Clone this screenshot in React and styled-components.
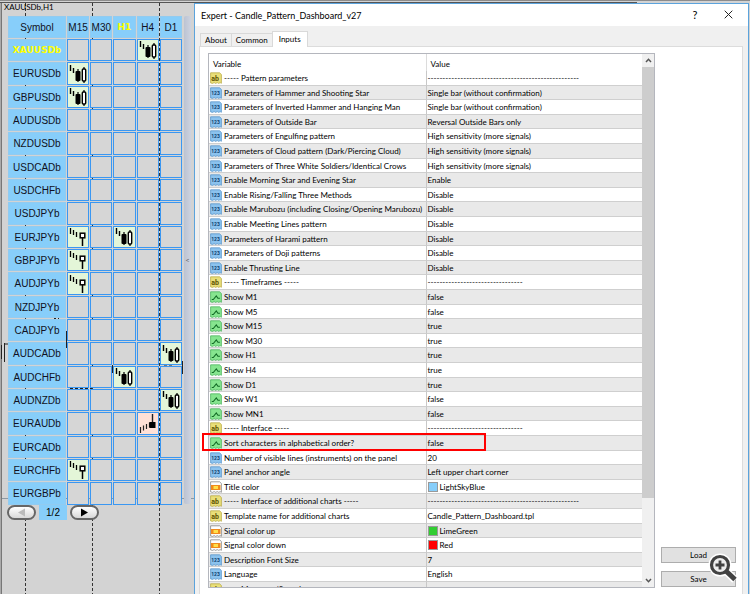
import React, { useState } from 'react';
import styled, { createGlobalStyle, css } from 'styled-components';

const GlobalStyle = createGlobalStyle`
  * {
    box-sizing: border-box;
  }
  body {
    margin: 0;
    background: #d3d3d3;
    font-family: Lato, "Liberation Sans", sans-serif;
    font-size: 8px;
    color: #000;
  }
  button {
    font: inherit;
    color: inherit;
    padding: 0;
  }
`;

const Desktop = styled.div`
  position: relative;
  display: flex;
  height: 100vh;
  overflow: hidden;
  border-top: 1px solid #8c8c8c;
`;

/* ---------- chart ---------- */

const ChartLayer = styled.svg`
  position: absolute;
  inset: 0;
  width: 100%;
  height: 100%;
`;

const ChartPane = styled.section`
  position: relative;
  flex: none;
  display: flex;
  flex-direction: column;
  width: 194px;
  padding-left: 4px;
`;

const ChartTitle = styled.div`
  height: 14px;
  padding-top: 1px;
  line-height: 10px;
`;

const PanelRow = styled.div`
  display: flex;
  padding-left: 3px;
`;

const PatternTable = styled.table`
  border-spacing: 1px;
  table-layout: fixed;
  width: 176px;
  font-family: "Liberation Sans", sans-serif;
  font-size: 10px;

  tr:nth-child(3n) > * {
    height: 23px;
  }
`;

const HeadCell = styled.th`
  height: 22px;
  padding: 0;
  overflow: hidden;
  font-family: ${({ $active }) => ($active ? '"DejaVu Sans", sans-serif' : 'inherit')};
  font-size: ${({ $active }) => ($active ? '9px' : '10px')};
  font-weight: ${({ $active }) => ($active ? 'bold' : 'normal')};
  color: ${({ $active }) => ($active ? '#ff0' : '#112')};
  background: #87cefa;
  border: 1px solid #92cbf0;
`;

const signalColors = {
  up: '#e4f6d8',
  down: '#ffe0d6',
};

const SignalCell = styled.td`
  height: 22px;
  padding: 0;
  border: 1px solid #3a97f2;
  background: ${({ $signal }) => signalColors[$signal] || '#d6d6d6'};

  svg {
    display: block;
    width: 20px;
    height: 20px;
  }
`;

const CollapseStrip = styled.button`
  width: 7px;
  margin: 1px 0 2px 1px;
  border: 0;
  border-radius: 2px;
  background: linear-gradient(90deg, #bcc3d2, #cdd3e0);
  color: #666;
`;

const Pager = styled.div`
  display: flex;
  align-items: center;
  gap: 3px;
  margin-top: -1px;
  padding-left: 3px;
  font-family: "Liberation Sans", sans-serif;
  font-size: 10px;
`;

const PagerButton = styled.button`
  display: flex;
  align-items: center;
  justify-content: center;
  width: 29px;
  height: 15px;
  border: 2px solid #666;
  border-radius: 8px;
  background: linear-gradient(#fff, #d8d8d8);
`;

const PageLabel = styled.span`
  width: 28px;
  height: 15px;
  line-height: 15px;
  text-align: center;
  background: #87cefa;
`;

/* ---------- dialog ---------- */

const Dialog = styled.section`
  position: relative;
  flex: 1;
  display: flex;
  flex-direction: column;
  min-width: 0;
  margin: 2px 1px 0 0;
  border: 1px solid #5ba3dc;
  border-bottom: 0;
  background: #f0f0f0;
`;

const TitleBar = styled.header`
  display: flex;
  align-items: center;
  height: 22px;
  padding: 0 12px 0 6px;
  background: #fff;
`;

const Title = styled.h1`
  flex: 1;
  margin: 0;
  font-size: 9px;
  font-weight: normal;
`;

const TitleButton = styled.button`
  width: 16px;
  margin-left: 17px;
  border: 0;
  background: none;
  font-size: 11px;
  line-height: 12px;
`;

const Tabs = styled.div`
  display: flex;
  align-items: flex-end;
  height: 20px;
  padding: 0 5px;
`;

const Tab = styled.button`
  height: 13px;
  padding: 0 4px;
  border: 1px solid #d9d9d9;
  border-width: 1px 0 0 1px;
  background: #f0f0f0;

  ${({ $active }) =>
    $active &&
    css`
      height: 16px;
      margin-bottom: -1px;
      padding: 0 6px 2px;
      border-right-width: 1px;
      background: #fff;
      z-index: 1;
    `}
`;

const TabPage = styled.div`
  flex: 1;
  display: flex;
  min-height: 0;
  margin: 0 5px 0 4px;
  padding: 6px 6px 0 8px;
  border: 1px solid #dcdcdc;
  border-bottom: 0;
  background: #fff;
`;

const ListBox = styled.div`
  flex: 1;
  display: flex;
  min-width: 0;
  margin-bottom: 6px;
  border: 1px solid #b4b6bd;
`;

const ListView = styled.div`
  flex: 1;
  min-width: 0;
  overflow: hidden;
`;

const InputTable = styled.table`
  width: 100%;
  border-collapse: separate;
  border-spacing: 0;
  table-layout: fixed;
  white-space: nowrap;
`;

const ColumnHead = styled.th`
  height: 17px;
  padding: 2px 4px 0;
  font-weight: normal;
  text-align: left;
  border-left: ${({ $divided }) => ($divided ? '1px solid #dcdcdc' : '0')};
`;

const InputRow = styled.tr`
  height: 15px;
  background: #fff;

  &:nth-child(even) {
    background: #e9e9e9;
  }
  &:nth-child(5n + 2),
  &:nth-child(5n + 4) {
    height: 14px;
  }
`;

const InputCell = styled.td`
  padding: 0 1px;
  overflow: hidden;
  line-height: 12px;
  border-bottom: 1px solid #cfcfcf;
  border-left: ${({ $divided }) => ($divided ? '1px solid #c8c8c8' : '0')};
`;

const CellContent = styled.div`
  display: flex;
  align-items: center;
  gap: 2px;
  height: 13px;

  svg {
    flex: none;
  }
`;

const Swatch = styled.span`
  width: 10px;
  height: 10px;
  border: 1px solid #999;
  background: ${({ $color }) => $color};
`;

const ScrollBar = styled.div`
  display: flex;
  flex-direction: column;
  width: 12px;
  background: #f0f0f0;
`;

const ScrollArrow = styled.button`
  display: flex;
  align-items: center;
  justify-content: center;
  height: 13px;
  border: 0;
  background: none;
`;

const ScrollTrack = styled.div`
  flex: 1;
`;

const ScrollThumb = styled.div`
  height: 85%;
  background: #cdcdcd;
`;

const SideActions = styled.div`
  display: flex;
  flex-direction: column;
  justify-content: flex-end;
  gap: 8px;
  margin: 0 0 7px 6px;
`;

const ActionButton = styled.button`
  width: 75px;
  height: 16px;
  border: 1px solid #adadad;
  background: #e1e1e1;
`;

const Highlight = styled.div`
  position: absolute;
  left: 7px;
  top: 429px;
  width: 284px;
  height: 18px;
  border: 2px solid #f00;
  pointer-events: none;
`;

const ZoomButton = styled.button`
  position: absolute;
  right: 12px;
  bottom: 11px;
  width: 30px;
  height: 30px;
  border: 0;
  background: none;
`;

/* ---------- data ---------- */

const timeframes = ['M15', 'M30', 'H1', 'H4', 'D1'];

const symbols = [
  { name: 'XAUUSDb', H4: 'engulf' },
  { name: 'EURUSDb', M15: 'engulf' },
  { name: 'GBPUSDb', M15: 'engulf' },
  { name: 'AUDUSDb' },
  { name: 'NZDUSDb' },
  { name: 'USDCADb' },
  { name: 'USDCHFb' },
  { name: 'USDJPYb' },
  { name: 'EURJPYb', M15: 'hammer', H1: 'engulf' },
  { name: 'GBPJPYb', M15: 'hammer' },
  { name: 'AUDJPYb', M15: 'hammer' },
  { name: 'NZDJPYb' },
  { name: 'CADJPYb' },
  { name: 'AUDCADb', D1: 'engulf' },
  { name: 'AUDCHFb', H1: 'engulf' },
  { name: 'AUDNZDb', D1: 'engulf' },
  { name: 'EURAUDb', H4: 'star' },
  { name: 'EURCADb' },
  { name: 'EURCHFb', M15: 'hammer' },
  { name: 'EURGBPb' },
];

const longRule = '-'.repeat(51);
const shortRule = '-'.repeat(32);

const inputs = [
  ['text', '----- Pattern parameters', longRule],
  ['number', 'Parameters of Hammer and Shooting Star', 'Single bar (without confirmation)'],
  ['number', 'Parameters of Inverted Hammer and Hanging Man', 'Single bar (without confirmation)'],
  ['number', 'Parameters of Outside Bar', 'Reversal Outside Bars only'],
  ['number', 'Parameters of Engulfing pattern', 'High sensitivity (more signals)'],
  ['number', 'Parameters of Cloud pattern (Dark/Piercing Cloud)', 'High sensitivity (more signals)'],
  ['number', 'Parameters of Three White Soldiers/Identical Crows', 'High sensitivity (more signals)'],
  ['number', 'Enable Morning Star and Evening Star', 'Enable'],
  ['number', 'Enable Rising/Falling Three Methods', 'Disable'],
  ['number', 'Enable Marubozu (including Closing/Opening Marubozu)', 'Disable'],
  ['number', 'Enable Meeting Lines pattern', 'Disable'],
  ['number', 'Parameters of Harami pattern', 'Disable'],
  ['number', 'Parameters of Doji patterns', 'Disable'],
  ['number', 'Enable Thrusting Line', 'Disable'],
  ['text', '----- Timeframes -----', shortRule],
  ['bool', 'Show M1', 'false'],
  ['bool', 'Show M5', 'false'],
  ['bool', 'Show M15', 'true'],
  ['bool', 'Show M30', 'true'],
  ['bool', 'Show H1', 'true'],
  ['bool', 'Show H4', 'true'],
  ['bool', 'Show D1', 'true'],
  ['bool', 'Show W1', 'false'],
  ['bool', 'Show MN1', 'false'],
  ['text', '----- Interface -----', shortRule],
  ['bool', 'Sort characters in alphabetical order?', 'false'],
  ['number', 'Number of visible lines (instruments) on the panel', '20'],
  ['number', 'Panel anchor angle', 'Left upper chart corner'],
  ['color', 'Title color', 'LightSkyBlue', '#87cefa'],
  ['text', '----- Interface of additional charts -----', longRule],
  ['text', 'Template name for additional charts', 'Candle_Pattern_Dashboard.tpl'],
  ['color', 'Signal color up', 'LimeGreen', '#32cd32'],
  ['color', 'Signal color down', 'Red', '#ff0000'],
  ['number', 'Description Font Size', '7'],
  ['number', 'Language', 'English'],
  ['text', '----- Messages/Sound -----', ''],
];

/* ---------- drawings ---------- */

const PatternIcon = ({ kind }) => {
  if (kind === 'engulf') {
    return (
      <svg viewBox="0 0 20 20">
        <path d="M2.500 1v6M5.500 4v5" stroke="#000" strokeWidth="1.4" />
        <path d="M10 5v13M16 3v16" stroke="#000" strokeWidth="1.2" />
        <rect x="7.500" y="7" width="5" height="10" rx="1" />
        <rect x="14.300" y="5" width="3.400" height="12" rx="1" fill="#fff" stroke="#000" strokeWidth="1.400" />
      </svg>
    );
  }
  if (kind === 'hammer') {
    return (
      <svg viewBox="0 0 20 20">
        <path d="M2.500 1v6M5.500 3v5M8.500 5v5" stroke="#000" strokeWidth="1.300" />
        <path d="M14.500 11v8" stroke="#000" strokeWidth="1.500" />
        <rect x="12.200" y="6.200" width="4.600" height="4.600" fill="#fff" stroke="#000" strokeWidth="1.500" />
      </svg>
    );
  }
  return (
    <svg viewBox="0 0 20 20">
      <path d="M2.500 13v6M5.500 11.500v5M8.500 10v5M11.500 8.500v5" stroke="#222" strokeWidth="1.200" />
      <path d="M14.500 0v9" stroke="#222" strokeWidth="1.400" />
      <rect x="11.500" y="8" width="6" height="6" />
    </svg>
  );
};

const typeColors = {
  text: ['#e9df79', '#b5a53a'],
  number: ['#8cc3ee', '#4d8ec7'],
  bool: ['#86e58f', '#3fae52'],
  color: ['#fdfdfd', '#777777'],
};

const TypeIcon = ({ type }) => {
  const [fill, stroke] = typeColors[type];
  return (
    <svg width="12" height="12" viewBox="0 0 12 12">
      <path
        d="M.6.8h9l1.8 1.700v8.800l-1.300-.7-1.300.8-1.600-.8-1.500.8-1.600-.8-1.500.8-2-.5z"
        fill={fill}
        stroke={stroke}
        strokeWidth=".7"
      />
      {type === 'text' && (
        <text x="1.300" y="8.500" fontSize="7" fontWeight="bold" fontFamily="Roboto" fill="#5c5200">ab</text>
      )}
      {type === 'number' && (
        <text x="1.200" y="8.200" fontSize="5" fontWeight="bold" fontFamily="Roboto" fill="#0d3f70">123</text>
      )}
      {type === 'bool' && (
        <path d="M1.800 8.500h1.500l3-3.500 1.600 2.200h2" fill="none" stroke="#126b25" strokeWidth="1.1" />
      )}
      {type === 'color' && (
        <>
          <rect x="1" y="4" width="9.500" height="5" fill="#f08a1c" />
          <rect x="3.500" y="5" width="4.500" height="3" fill="#ffe04a" />
        </>
      )}
    </svg>
  );
};

const Triangle = ({ flip, color }) => (
  <svg width="9" height="9" viewBox="0 0 9 9">
    <path d={flip ? 'M8 .5v8L1 4.500z' : 'M1 .5v8L8 4.500z'} fill={color} />
  </svg>
);

const Chevron = ({ down }) => (
  <svg width="7" height="5" viewBox="0 0 7 5">
    <path d={down ? 'M1 1l2.500 2.700L6 1' : 'M1 4l2.500-2.700L6 4'} fill="none" stroke="#555" strokeWidth="1.5" />
  </svg>
);

const ChartBackground = () => (
  <ChartLayer>
    <path d="M0 1.500H637" stroke="#555" strokeWidth="1" />
    <path d="M.5 2V594" stroke="#aaa" />
    <path d="M1.500 2V594" stroke="#777" />
    <path d="M25.500 2V594M92.500 2V594M159.500 2V594" stroke="#333" strokeDasharray="3 2" />
    <path d="M2 497.500H194" stroke="#8d99a3" />
    <path d="M1.500 344v14M4.500 342v19M4 343h4" stroke="#222" fill="none" />
    <path d="M8 345.500h32M54 317.500h5M66 345.500h4" stroke="#222" strokeDasharray="2 2" />
    <path d="M66.500 330v17M182.500 360v13M112.500 364v8" stroke="#222" />
    <path d="M70 387.500h22M138 363.500h8M164 364h8" stroke="#222" strokeDasharray="3 2" />
  </ChartLayer>
);

const Magnifier = () => (
  <svg width="30" height="30" viewBox="0 0 30 30" fill="none">
    <path d="M19 19l8 8" stroke="#fff" strokeWidth="8" />
    <circle cx="12" cy="12" r="9" fill="#fff" stroke="#fff" strokeWidth="5" />
    <circle cx="12" cy="12" r="8.500" fill="#eee" stroke="#424242" strokeWidth="3.200" />
    <path d="M12 7.500v9M7.500 12h9" stroke="#424242" strokeWidth="2.800" />
    <path d="M18.500 18.500l8.500 8" stroke="#424242" strokeWidth="5" />
  </svg>
);

/* ---------- parts ---------- */

const PatternPanel = () => (
  <ChartPane>
    <ChartTitle>XAUUSDb,H1</ChartTitle>
    <PanelRow>
      <PatternTable>
        <colgroup>
          <col width="58" />
          {timeframes.map((tf) => (
            <col key={tf} />
          ))}
        </colgroup>
        <tbody>
          <tr>
            <HeadCell scope="col">Symbol</HeadCell>
            {timeframes.map((tf) => (
              <HeadCell key={tf} scope="col" $active={tf === 'H1'}>{tf}</HeadCell>
            ))}
          </tr>
          {symbols.map((row) => (
            <tr key={row.name}>
              <HeadCell scope="row" $active={row.name === 'XAUUSDb'}>{row.name}</HeadCell>
              {timeframes.map((tf) => (
                <SignalCell key={tf} $signal={row[tf] && (row[tf] === 'star' ? 'down' : 'up')}>
                  {row[tf] && <PatternIcon kind={row[tf]} />}
                </SignalCell>
              ))}
            </tr>
          ))}
        </tbody>
      </PatternTable>
      <CollapseStrip aria-label="Collapse panel">&lt;</CollapseStrip>
    </PanelRow>
    <Pager>
      <PagerButton aria-label="Previous page">
        <Triangle flip color="#bbb" />
      </PagerButton>
      <PageLabel>1/2</PageLabel>
      <PagerButton aria-label="Next page">
        <Triangle color="#000" />
      </PagerButton>
    </Pager>
  </ChartPane>
);

const InputsList = () => (
  <ListBox>
    <ListView>
      <InputTable>
        <colgroup>
          <col width="50%" />
          <col width="50%" />
        </colgroup>
        <thead>
          <tr>
            <ColumnHead scope="col">Variable</ColumnHead>
            <ColumnHead scope="col" $divided>Value</ColumnHead>
          </tr>
        </thead>
        <tbody>
          {inputs.map(([type, name, value, color]) => (
            <InputRow key={name}>
              <InputCell>
                <CellContent>
                  <TypeIcon type={type} />
                  {name}
                </CellContent>
              </InputCell>
              <InputCell $divided>
                <CellContent>
                  {color && <Swatch $color={color} />}
                  {value}
                </CellContent>
              </InputCell>
            </InputRow>
          ))}
        </tbody>
      </InputTable>
    </ListView>
    <ScrollBar>
      <ScrollArrow aria-label="Scroll up"><Chevron /></ScrollArrow>
      <ScrollTrack><ScrollThumb /></ScrollTrack>
      <ScrollArrow aria-label="Scroll down"><Chevron down /></ScrollArrow>
    </ScrollBar>
  </ListBox>
);

function App() {
  const [tab, setTab] = useState('Inputs');

  return (
    <Desktop>
      <GlobalStyle />
      <ChartBackground />
      <PatternPanel />
      <Dialog>
        <TitleBar>
          <Title>Expert - Candle_Pattern_Dashboard_v27</Title>
          <TitleButton aria-label="Help">?</TitleButton>
          <TitleButton aria-label="Close">
            <svg width="9" height="9" viewBox="0 0 9 9">
              <path d="M.7.7l7.600 7.600M8.300.7L.7 8.300" stroke="#222" />
            </svg>
          </TitleButton>
        </TitleBar>
        <Tabs>
          {['About', 'Common', 'Inputs'].map((name) => (
            <Tab key={name} $active={tab === name} onClick={() => setTab(name)}>{name}</Tab>
          ))}
        </Tabs>
        <TabPage>
          <InputsList />
          <SideActions>
            <ActionButton>Load</ActionButton>
            <ActionButton>Save</ActionButton>
          </SideActions>
        </TabPage>
        <Highlight />
      </Dialog>
      <ZoomButton aria-label="Enlarge">
        <Magnifier />
      </ZoomButton>
    </Desktop>
  );
}

export default App;
